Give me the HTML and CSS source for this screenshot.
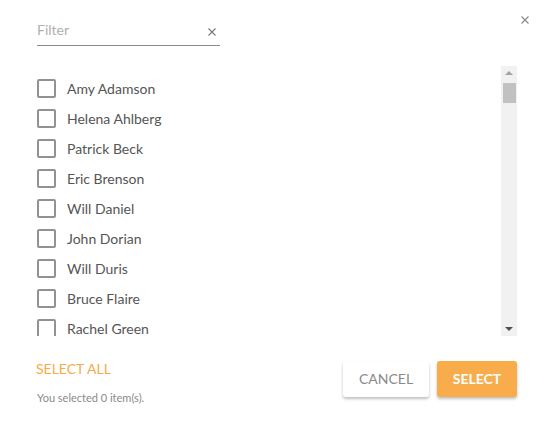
FILE: index.html
```html
<!DOCTYPE html>
<html>
<head>
<meta charset="utf-8">
<link rel="stylesheet" href="styles.css">
</head>
<body>
<div class="dialog">
  <div class="header">
    <div class="filter">
      <span class="placeholder">Filter</span>
      <svg class="clear" width="8" height="8" viewBox="0 0 8 8"><path d="M0.5 0.5L7.5 7.5M7.5 0.5L0.5 7.5" stroke="#777" stroke-width="1.1"/></svg>
    </div>
    <svg class="close" width="8" height="8" viewBox="0 0 8 8"><path d="M0.5 0.5L7.5 7.5M7.5 0.5L0.5 7.5" stroke="#888" stroke-width="1.1"/></svg>
  </div>
  <div class="listwrap">
    <div class="list">
      <div class="row"><span class="box"></span><span>Amy Adamson</span></div>
      <div class="row"><span class="box"></span><span>Helena Ahlberg</span></div>
      <div class="row"><span class="box"></span><span>Patrick Beck</span></div>
      <div class="row"><span class="box"></span><span>Eric Brenson</span></div>
      <div class="row"><span class="box"></span><span>Will Daniel</span></div>
      <div class="row"><span class="box"></span><span>John Dorian</span></div>
      <div class="row"><span class="box"></span><span>Will Duris</span></div>
      <div class="row"><span class="box"></span><span>Bruce Flaire</span></div>
      <div class="row"><span class="box"></span><span>Rachel Green</span></div>
    </div>
    <div class="scrollbar">
      <div class="arrow up"></div>
      <div class="thumb"></div>
      <div class="track"></div>
      <div class="arrow down"></div>
    </div>
  </div>
  <div class="footer">
    <div class="left">
      <div class="selall">SELECT ALL</div>
      <div class="count">You selected 0 item(s).</div>
    </div>
    <div class="buttons">
      <div class="btn cancel">CANCEL</div>
      <div class="btn select">SELECT</div>
    </div>
  </div>
</div>
</body>
</html>
```
FILE: styles.css
```css
html, body {
  margin: 0;
  padding: 0;
  background: #fff;
}
body {
  font-family: Lato, "Open Sans", sans-serif;
  width: 546px;
  height: 422px;
  overflow: hidden;
}
.dialog {
  padding: 16px 29px 0 37px;
}
.header {
  display: flex;
  justify-content: space-between;
  align-items: flex-start;
}
.filter {
  width: 183px;
  height: 30px;
  border-bottom: 1px solid #8a8a8a;
  display: flex;
  align-items: center;
  justify-content: space-between;
  padding-right: 4px;
  box-sizing: border-box;
}
.placeholder {
  color: #b0b0b0;
  font-size: 14px;
  line-height: 16px;
  margin-top: -2px;
}
.clear {
  margin-top: 2px;
}
.close {
  margin-right: -12px;
  margin-top: 0px;
}
.listwrap {
  margin-top: 20px;
  display: flex;
  height: 270px;
}
.list {
  flex: 1;
  overflow: hidden;
  padding-top: 7px;
}
.row {
  height: 30px;
  display: flex;
  align-items: center;
  font-size: 14px;
  color: #555;
}
.box {
  width: 15px;
  height: 15px;
  border: 2px solid #929292;
  border-radius: 2px;
  margin-right: 11px;
  flex: none;
}
.scrollbar {
  width: 16px;
  background: #f1f1f1;
  display: flex;
  flex-direction: column;
  align-items: center;
}
.arrow {
  height: 15px;
  width: 16px;
  position: relative;
}
.arrow.up::after, .arrow.down::after {
  content: "";
  position: absolute;
  left: 4px;
  width: 0;
  height: 0;
  border-left: 4px solid transparent;
  border-right: 4px solid transparent;
}
.arrow.up::after {
  top: 5px;
  border-bottom: 4px solid #a3a3a3;
}
.arrow.down::after {
  top: 6px;
  border-top: 4px solid #505050;
}
.thumb {
  width: 13px;
  height: 20px;
  background: #c1c1c1;
  margin-top: 2px;
}
.track {
  flex: 1;
}
.footer {
  display: flex;
  justify-content: space-between;
  margin-top: 24px;
}
.selall {
  color: #f6ab47;
  font-size: 14px;
  line-height: 17px;
  margin-left: -1px;
}
.count {
  color: #8a8a8a;
  font-size: 11px;
  line-height: 13px;
  margin-top: 14px;
}
.buttons {
  display: flex;
  gap: 8px;
  margin-top: 1px;
}
.btn {
  height: 36px;
  box-sizing: border-box;
  padding-bottom: 2px;
  border-radius: 3px;
  display: flex;
  align-items: center;
  justify-content: center;
  font-size: 14px;
  box-shadow: 0 2px 3px rgba(0,0,0,0.25);
}
.cancel {
  width: 86px;
  background: #fff;
  color: #8a8a8a;
}
.select {
  width: 80px;
  background: #f8ac4b;
  color: #fff;
  font-weight: bold;
}
```
